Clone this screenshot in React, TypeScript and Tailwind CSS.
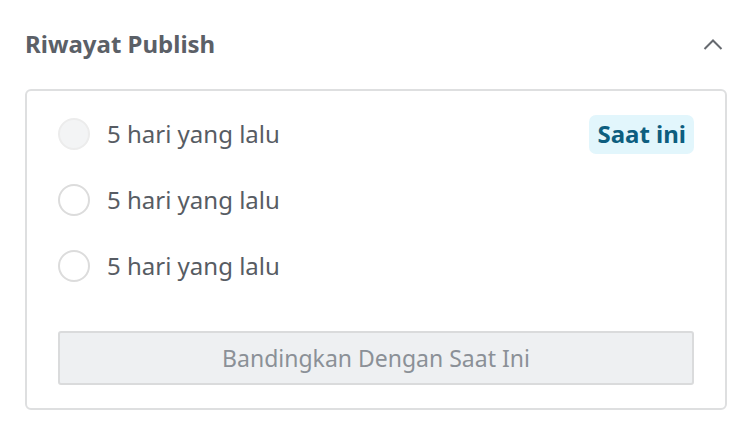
export default function App() {
  const rows = [
    { label: "5 hari yang lalu", current: true },
    { label: "5 hari yang lalu", current: false },
    { label: "5 hari yang lalu", current: false },
  ];

  return (
    <div className="w-[752px] h-[436px] bg-white px-[25px] pt-[24px] font-['Noto_Sans',sans-serif]">
      {/* Header */}
      <div className="flex items-center justify-between h-10 pr-[4px]">
        <h2 className="text-[24px] font-bold text-[#5b6067]">Riwayat Publish</h2>
        <svg width="20" height="12" viewBox="0 0 20 12" fill="none" className="text-[#666a70]">
          <path d="M1.5 11 L10 2.5 L18.5 11" stroke="currentColor" strokeWidth="2" />
        </svg>
      </div>

      {/* Card */}
      <div className="mt-[25px] border-2 border-[#dedfe0] rounded-[6px] pl-[31px] pr-[31px] pt-[27px] pb-[23px]">
        <div className="flex flex-col gap-[34px]">
          {rows.map((row, i) => (
            <label key={i} className="flex items-center justify-between h-8">
              <div className="flex items-center gap-[17px]">
                <span
                  className={
                    row.current
                      ? "w-8 h-8 rounded-full border-2 border-[#ececec] bg-[#f3f4f5]"
                      : "w-8 h-8 rounded-full border-2 border-[#dcdcdc] bg-white"
                  }
                />
                <span className="text-[24px] text-[#575c63]">{row.label}</span>
              </div>
              {row.current && (
                <span className="h-[39px] flex items-center px-2 rounded-[7px] bg-[#e2f6fc] text-[24px] font-bold text-[#0d5e7f]">
                  Saat ini
                </span>
              )}
            </label>
          ))}
        </div>

        <button className="mt-[49px] w-full h-[54px] rounded-[3px] border-2 border-[#dadbdc] bg-[#eef0f2] text-[23px] text-[#8b9097]">
          Bandingkan Dengan Saat Ini
        </button>
      </div>
    </div>
  );
}
